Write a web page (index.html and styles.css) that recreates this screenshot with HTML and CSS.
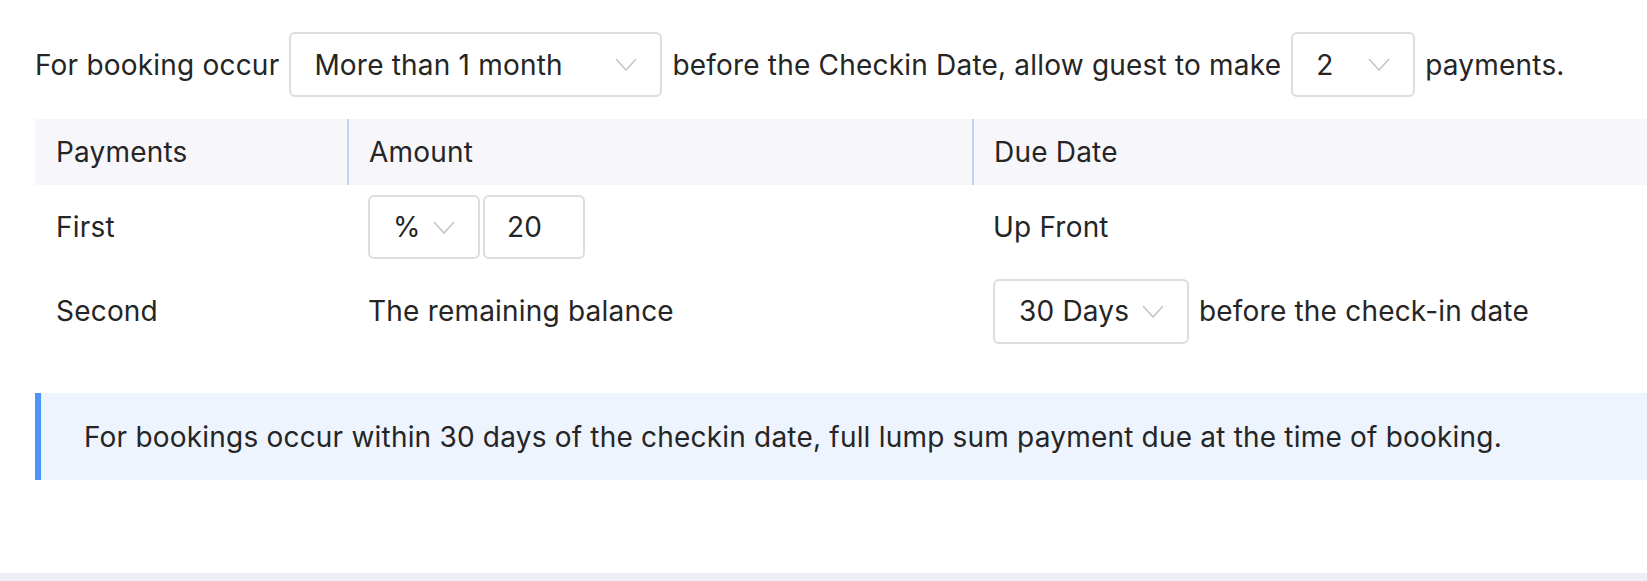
FILE: index.html
```html
<!DOCTYPE html>
<html lang="en">
<head>
<meta charset="utf-8">
<title>Payment plan</title>
<link rel="stylesheet" href="styles.css">
</head>
<body>
<main class="page">
  <div class="rule">
    <span>For booking occur</span>
    <div class="select select--wide"><span>More than 1 month</span><svg class="chev" viewBox="0 0 22 13"><polyline points="1,1 11,12 21,1"/></svg></div>
    <span>before the Checkin Date, allow guest to make</span>
    <div class="select select--count"><span>2</span><svg class="chev" viewBox="0 0 22 13"><polyline points="1,1 11,12 21,1"/></svg></div>
    <span>payments.</span>
  </div>

  <div class="plan">
    <div class="plan__head">
      <div class="cell">Payments</div>
      <div class="cell cell--div">Amount</div>
      <div class="cell cell--div">Due Date</div>
    </div>
    <div class="plan__row">
      <div class="cell">First</div>
      <div class="cell">
        <div class="amount">
          <div class="select select--unit"><span>%</span><svg class="chev" viewBox="0 0 22 13"><polyline points="1,1 11,12 21,1"/></svg></div>
          <div class="input">20</div>
        </div>
      </div>
      <div class="cell">Up Front</div>
    </div>
    <div class="plan__row">
      <div class="cell">Second</div>
      <div class="cell">The remaining balance</div>
      <div class="cell">
        <div class="due">
          <div class="select select--days"><span>30 Days</span><svg class="chev" viewBox="0 0 22 13"><polyline points="1,1 11,12 21,1"/></svg></div>
          <span>before the check-in date</span>
        </div>
      </div>
    </div>
  </div>

  <div class="note">For bookings occur within 30 days of the checkin date, full lump sum payment due at the time of booking.</div>
</main>
<div class="band"></div>
</body>
</html>
```

FILE: styles.css
```css
html, body {
  margin: 0;
  padding: 0;
  background: #ffffff;
}
body {
  font-family: "Inter", "Liberation Sans", sans-serif;
  font-size: 28px;
  letter-spacing: 0.2px;
  color: #252525;
  overflow: hidden;
}
.page {
  padding: 32px 0 0 35px;
}
.rule {
  display: flex;
  align-items: center;
  gap: 10px;
  height: 65px;
  white-space: nowrap;
}
.select {
  box-sizing: border-box;
  height: 65px;
  border: 2px solid #dddddd;
  border-radius: 6px;
  display: flex;
  align-items: center;
  justify-content: space-between;
  padding: 0 23px 0 23px;
  background: #fff;
  white-space: nowrap;
}
.chev {
  width: 22px;
  height: 13px;
  flex: none;
}
.chev polyline {
  fill: none;
  stroke: #c6c6c6;
  stroke-width: 1.6;
}
.select--wide { width: 373px; }
.select--count { width: 124px; }
.select--unit { width: 112px; height: 64px; }
.select--days { width: 196px; padding-left: 24px; }

.plan {
  margin-top: 22px;
}
.plan__head, .plan__row {
  display: grid;
  grid-template-columns: 312px 625px 1fr;
}
.plan__head {
  height: 66px;
  background: #f7f7fb;
}
.plan__row {
  height: 84px;
}
.cell {
  display: flex;
  align-items: center;
  padding-left: 21px;
  white-space: nowrap;
}
.cell--div {
  border-left: 2px solid #c3d2fa;
  padding-left: 20px;
}
.amount {
  display: flex;
  gap: 3px;
}
.input {
  box-sizing: border-box;
  width: 102px;
  height: 64px;
  border: 2px solid #dddddd;
  border-radius: 6px;
  display: flex;
  align-items: center;
  padding-left: 22px;
}
.due {
  display: flex;
  align-items: center;
  gap: 10px;
}
.note {
  margin-top: 40px;
  height: 87px;
  box-sizing: border-box;
  background: #edf4fe;
  border-left: 6px solid #4c94fb;
  padding-left: 43px;
  display: flex;
  align-items: center;
  white-space: nowrap;
}
.band {
  margin-top: 93px;
  height: 30px;
  background: #eceff5;
}
```
